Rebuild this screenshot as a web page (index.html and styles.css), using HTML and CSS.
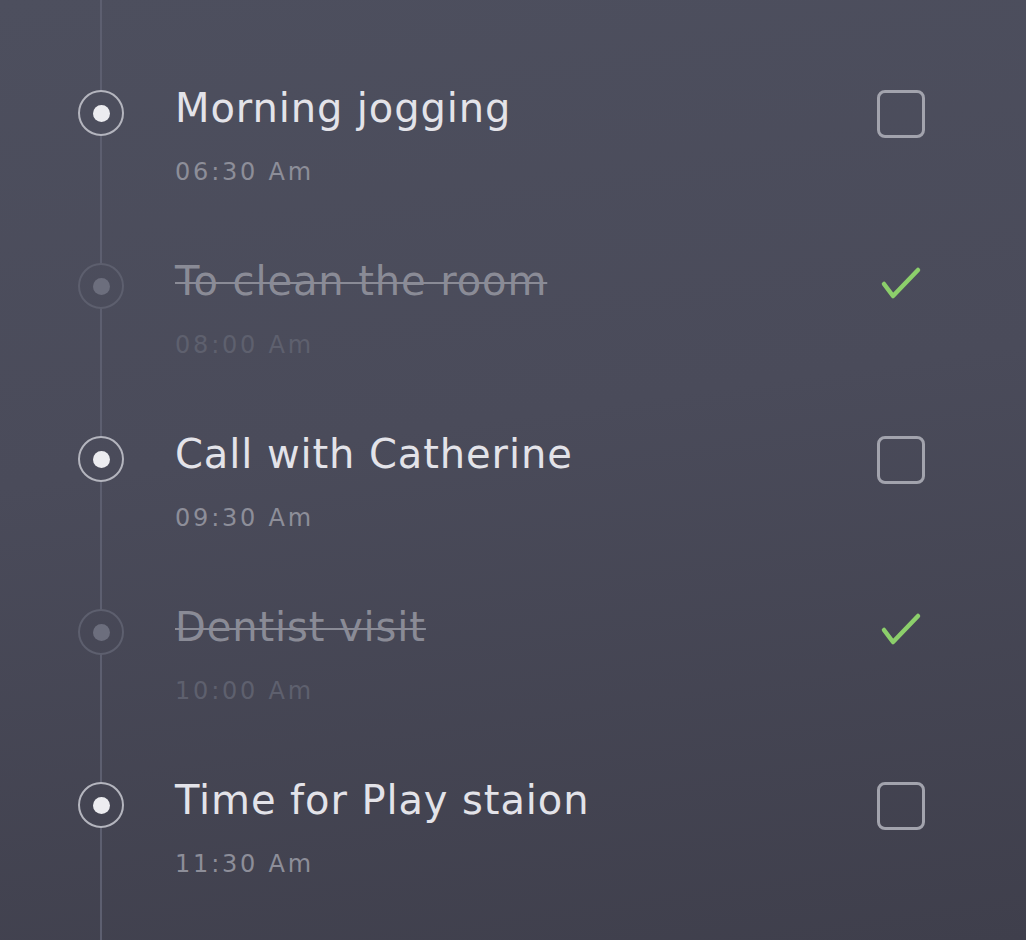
FILE: index.html
```html
<!DOCTYPE html>
<html>
<head>
<meta charset="utf-8">
<link rel="stylesheet" href="styles.css">
</head>
<body>
<main class="timeline">
  <div class="task">
    <span class="marker"></span>
    <div class="info">
      <div class="title">Morning jogging</div>
      <div class="time">06:30 Am</div>
    </div>
    <span class="box"></span>
  </div>
  <div class="task done">
    <span class="marker"></span>
    <div class="info">
      <div class="title">To clean the room</div>
      <div class="time">08:00 Am</div>
    </div>
    <svg class="check" viewBox="0 0 48 48" width="48" height="48"><path d="M7 25 L16 37 L41 11" fill="none" stroke="#8ccf6b" stroke-width="4.5" stroke-linecap="round" stroke-linejoin="round"/></svg>
  </div>
  <div class="task">
    <span class="marker"></span>
    <div class="info">
      <div class="title">Call with Catherine</div>
      <div class="time">09:30 Am</div>
    </div>
    <span class="box"></span>
  </div>
  <div class="task done">
    <span class="marker"></span>
    <div class="info">
      <div class="title">Dentist visit</div>
      <div class="time">10:00 Am</div>
    </div>
    <svg class="check" viewBox="0 0 48 48" width="48" height="48"><path d="M7 25 L16 37 L41 11" fill="none" stroke="#8ccf6b" stroke-width="4.5" stroke-linecap="round" stroke-linejoin="round"/></svg>
  </div>
  <div class="task">
    <span class="marker"></span>
    <div class="info">
      <div class="title">Time for Play staion</div>
      <div class="time">11:30 Am</div>
    </div>
    <span class="box"></span>
  </div>
</main>
</body>
</html>
```

FILE: styles.css
```css
html, body {
  margin: 0;
  height: 100%;
}
body {
  background: linear-gradient(172deg, #4d4f5e 0%, #4a4b5a 45%, #3f3f4c 100%);
  background-attachment: fixed;
  font-family: "DejaVu Sans", "Liberation Sans", sans-serif;
  overflow: hidden;
}
.timeline {
  position: relative;
  height: 940px;
  padding: 85px 0 0 78px;
  box-sizing: border-box;
}
.timeline::before {
  content: "";
  position: absolute;
  left: 100px;
  top: 0;
  bottom: 0;
  width: 2px;
  background: #5d5f70;
}
.task {
  display: flex;
  align-items: flex-start;
  height: 173px;
}
.marker {
  position: relative;
  width: 46px;
  height: 46px;
  margin-top: 5px;
  box-sizing: border-box;
  border: 2px solid #b4b5be;
  border-radius: 50%;
  background: linear-gradient(172deg, #4d4f5e 0%, #4a4b5a 45%, #3f3f4c 100%);
  background-attachment: fixed;
  display: flex;
  align-items: center;
  justify-content: center;
  flex-shrink: 0;
}
.marker::after {
  content: "";
  width: 17px;
  height: 17px;
  border-radius: 50%;
  background: #ececf0;
}
.info {
  margin-left: 51px;
  flex: 1;
}
.title {
  font-size: 40px;
  line-height: 46px;
  color: #e3e3e9;
  letter-spacing: 0.9px;
}
.time {
  margin-top: 27px;
  font-size: 24px;
  line-height: 28px;
  letter-spacing: 2.8px;
  color: #8d8e99;
}
.box {
  width: 48px;
  height: 48px;
  margin-top: 5px;
  margin-right: 101px;
  box-sizing: border-box;
  border: 3px solid #a2a3ad;
  border-radius: 8px;
  flex-shrink: 0;
}
.check {
  display: block;
  margin-top: 1px;
  margin-right: 101px;
  flex-shrink: 0;
}
.done .marker {
  border-color: #5d5f6e;
}
.done .marker::after {
  background: #6c6e7d;
}
.done .title {
  color: #8a8b96;
  text-decoration: line-through;
  text-decoration-thickness: 2px;
}
.done .time {
  color: #5e606e;
}
```
